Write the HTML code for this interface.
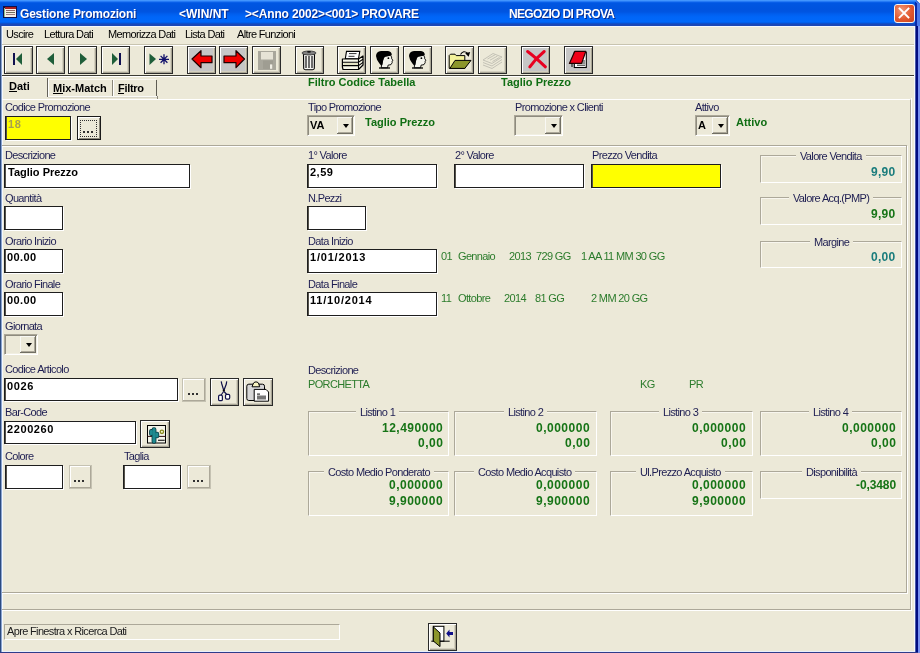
<!DOCTYPE html><html><head><meta charset="utf-8"><style>*{box-sizing:border-box}
html,body{margin:0;padding:0}
body{width:920px;height:653px;overflow:hidden;position:relative;background:#ECE9D8;font-family:"Liberation Sans",sans-serif;font-size:11px;color:#000}
.a{position:absolute}
svg.a{overflow:visible}
.t{position:absolute;white-space:pre;line-height:13px;font-size:11px;letter-spacing:-0.65px}
.ttl{position:absolute;white-space:pre;line-height:15px;font-size:12px;font-weight:bold;color:#fff;text-shadow:1px 1px 0 #0A2A8A}
.lb{color:#1E1E52}
.b{font-weight:bold;letter-spacing:0}
.n{font-weight:bold;letter-spacing:0.9px}
.g{color:#2C7C2C}
.gb{color:#106E14;font-weight:bold}
.inp{position:absolute;background:#fff;border:1px solid #1e1e1e;box-shadow:inset 1px 0 0 #55534a,1px 1px 0 #fff}
.btn{position:absolute;width:29px;height:28px;border:1px solid #2a2a2a;background:#ECE9D8;box-shadow:inset 1px 1px 0 #fff,inset -1px -1px 0 #A8A595,inset -2px -2px 0 #D4D0C0}
.combo{position:absolute;background:#ECE9D8;border-top:1px solid #ACA899;border-left:1px solid #ACA899;border-right:1px solid #fff;border-bottom:1px solid #fff;box-shadow:inset 1px 1px 0 #8E8B7E,inset -1px -1px 0 #F1EFE2}
.dd{position:absolute;top:1px;right:1px;width:16px;bottom:1px;background:#ECE9D8;border-right:1px solid #716F64;border-bottom:1px solid #716F64;box-shadow:inset 1px 1px 0 #F8F8F4,inset -1px -1px 0 #ACA899}
.dd:after{content:"";position:absolute;left:6px;top:7px;border-left:3px solid transparent;border-right:3px solid transparent;border-top:4px solid #000}
.grp{position:absolute;border-top:1px solid #ACA899;border-left:1px solid #ACA899;border-right:1px solid #fff;border-bottom:1px solid #fff;box-shadow:inset 1px 1px 0 #F8F6EE}
.gt{position:absolute;white-space:pre;line-height:13px;font-size:11px;letter-spacing:-0.65px;color:#1E1E52;background:#ECE9D8;padding:0 4px}
.dots{position:absolute;background:#ECE9D8;border:1px solid #C5C2B2;box-shadow:inset -1px -1px 0 #ACA899,inset 1px 1px 0 #fff}

.nv{position:absolute;white-space:pre;line-height:13px;font-size:12px;font-weight:bold;letter-spacing:0.5px}

.t,.ttl,.gt,.nv{will-change:transform}
</style></head><body>
<div class="a" style="left:0;top:0;width:920px;height:26px;background:linear-gradient(#4A9CFF 0px,#3A8EFC 1px,#1066EE 2px,#0056E2 3px,#0053DE 9px,#0055E2 12px,#005EEE 14px,#0066F8 17px,#0068FA 22px,#0058E0 23px,#1A48B8 24px,#1A48B8 26px)"></div>
<div class="a" style="left:2px;top:26px;width:912px;height:1px;background:#F4F8FC"></div>
<div class="a" style="left:0;top:26px;width:3px;height:627px;background:linear-gradient(90deg,#2C4A80 0,#2C4A80 1px,#8AA4D0 1px,#8AA4D0 2px,#F4F8FC 2px)"></div>
<div class="a" style="left:914px;top:26px;width:6px;height:627px;background:linear-gradient(90deg,#F4F8FC 0,#F4F8FC 1px,#4A5AA8 1px,#4A5AA8 2px,#000C80 2px,#000C80 4px,#7890F0 4px)"></div>
<div class="a" style="left:2px;top:651px;width:913px;height:1px;background:#E8F0FC"></div>
<div class="a" style="left:0;top:652px;width:918px;height:1px;background:#2E3C8A"></div>
<div class="a" style="left:3px;top:6px;width:14px;height:12px;background:#10104A"></div>
<div class="a" style="left:5px;top:7px;width:11px;height:2px;background:#A82020"></div>
<div class="a" style="left:5px;top:9px;width:11px;height:8px;background:#F6EEE6"></div>
<div class="a" style="left:4px;top:8px;width:1px;height:9px;background:#90C090"></div>
<div class="a" style="left:6px;top:10px;width:9px;height:1px;background:#906A6A"></div>
<div class="a" style="left:6px;top:12px;width:9px;height:1px;background:#707060"></div>
<div class="a" style="left:6px;top:14px;width:9px;height:1px;background:#A08080"></div>
<div class="ttl" style="left:20px;top:7px;letter-spacing:-0.2px">Gestione Promozioni</div>
<div class="ttl" style="left:179px;top:7px;">&lt;WIN/NT</div>
<div class="ttl" style="left:245px;top:7px;letter-spacing:-0.15px">&gt;&lt;Anno 2002&gt;&lt;001&gt; PROVARE</div>
<div class="ttl" style="left:509px;top:7px;letter-spacing:-0.65px">NEGOZIO DI PROVA</div>
<div class="a" style="left:894px;top:4px;width:21px;height:19px;border:1px solid #F4F4F4;border-radius:3px;background:radial-gradient(ellipse at 35% 30%,#F09878,#E2582E 55%,#C84420)"></div>
<svg class="a" style="left:894px;top:4px" width="21" height="19"><path d="M5.5 4.5 L14.5 13.5 M14.5 4.5 L5.5 13.5" stroke="#fff" stroke-width="1.8" stroke-linecap="square"/></svg>
<div class="a" style="left:915px;top:2px;width:5px;height:24px;background:linear-gradient(90deg,#0A2AA8 0,#0A2AA8 2px,#4A78E8 2px)"></div>
<div class="a" style="left:916px;top:0;width:4px;height:3px;background:linear-gradient(225deg,#E8EEF8 0,#E8EEF8 50%,#3A70E0 50%)"></div>
<div class="t" style="left:6px;top:28px;">Uscire</div>
<div class="t" style="left:44px;top:28px;">Lettura Dati</div>
<div class="t" style="left:108px;top:28px;">Memorizza Dati</div>
<div class="t" style="left:185px;top:28px;">Lista Dati</div>
<div class="t" style="left:237px;top:28px;">Altre Funzioni</div>
<div class="a" style="left:2px;top:44px;width:912px;height:1px;background:#C8C4B0"></div>
<div class="a" style="left:2px;top:45px;width:912px;height:1px;background:#fff"></div>
<div class="btn" style="left:4px;top:46px;">
<svg class="a" style="left:-1px;top:-1px" width="29" height="28" viewBox="0 0 29 28"><rect x="9" y="7" width="2" height="12" fill="#101050"/><path d="M12 13 L18 7 L18 19 Z" fill="#1F5E3A"/></svg>
</div>
<div class="btn" style="left:36px;top:46px;">
<svg class="a" style="left:-1px;top:-1px" width="29" height="28" viewBox="0 0 29 28"><path d="M11 13 L18 7 L18 19 Z" fill="#1F5E3A"/></svg>
</div>
<div class="btn" style="left:68px;top:46px;">
<svg class="a" style="left:-1px;top:-1px" width="29" height="28" viewBox="0 0 29 28"><path d="M12 7 L19 13 L12 19 Z" fill="#1F5E3A"/></svg>
</div>
<div class="btn" style="left:101px;top:46px;">
<svg class="a" style="left:-1px;top:-1px" width="29" height="28" viewBox="0 0 29 28"><path d="M11 7 L17 13 L11 19 Z" fill="#1F5E3A"/><rect x="18" y="7" width="2" height="12" fill="#101050"/></svg>
</div>
<div class="btn" style="left:144px;top:46px;">
<svg class="a" style="left:-1px;top:-1px" width="29" height="28" viewBox="0 0 29 28"><path d="M5.5 7.5 L12 13 L5.5 19 Z" fill="#1F5E3A"/><g stroke="#10106A" stroke-width="1.3"><path d="M15 13.3 H25 M20 8.3 V18.3 M16.6 9.9 L23.4 16.7 M23.4 9.9 L16.6 16.7"/></g><circle cx="20" cy="13.3" r="1.6" fill="#10106A"/></svg>
</div>
<div class="btn" style="left:187px;top:46px;background:#C6C6C6;">
<svg class="a" style="left:-1px;top:-1px" width="29" height="28" viewBox="0 0 29 28"><path d="M5 13 L14 4.7 L14 10 L25 10 L25 16.7 L14 16.7 L14 21.7 Z" fill="#F00000" stroke="#200000" stroke-width="1.2" stroke-linejoin="round"/></svg>
</div>
<div class="btn" style="left:219px;top:46px;background:#C6C6C6;">
<svg class="a" style="left:-1px;top:-1px" width="29" height="28" viewBox="0 0 29 28"><path d="M25.5 13 L17 4.7 L17 10 L5 10 L5 16.7 L17 16.7 L17 21.7 Z" fill="#F00000" stroke="#200000" stroke-width="1.2" stroke-linejoin="round"/></svg>
</div>
<div class="btn" style="left:252px;top:46px;">
<svg class="a" style="left:-1px;top:-1px" width="29" height="28" viewBox="0 0 29 28"><path d="M6 5 H24 V24 H6 Z" fill="#A9A79C"/><rect x="9" y="6" width="12" height="7.5" fill="#E6E3D6"/><rect x="11" y="14.5" width="10" height="8.5" fill="#9F9D92"/><rect x="18" y="18.4" width="2.3" height="4.4" fill="#F0EEE4"/></svg>
</div>
<div class="btn" style="left:295px;top:46px;">
<svg class="a" style="left:-1px;top:-1px" width="29" height="28" viewBox="0 0 29 28"><path d="M8.5 8 H19.5 L19.3 22.5 Q19 23.8 17.5 23.8 H10.5 Q9 23.8 8.7 22.5 Z" fill="#F4F4F0" stroke="#000" stroke-width="1.1"/><ellipse cx="14" cy="7" rx="7" ry="2" fill="#808080" stroke="#303030" stroke-width="0.8"/><ellipse cx="14" cy="5.8" rx="2" ry="0.9" fill="#111"/><path d="M11 10 V22 M14 10 V22 M17 10 V22" stroke="#333" stroke-width="1.4"/></svg>
</div>
<div class="btn" style="left:337px;top:46px;">
<svg class="a" style="left:-1px;top:-1px" width="29" height="28" viewBox="0 0 29 28"><path d="M9.5 5.4 H22.8 L21.5 12.7 H8.3 Z" fill="#fff" stroke="#000" stroke-width="1.1"/><path d="M12 7.6 H19.5 M11.5 10.3 H17.5" stroke="#333" stroke-width="1"/><path d="M5.4 13 H21.5 L26 10 V19 L21.5 23.5 H6 L5.4 21 Z" fill="#F8F8E8" stroke="#000" stroke-width="1.2" stroke-linejoin="round"/><path d="M5.5 16.2 H21.5 L26 13.2 M5.8 19.6 H21.5 L26 16.4 M21.5 13 V23.5" stroke="#000" stroke-width="1.1" fill="none"/><path d="M6.5 18 H21" stroke="#D0D0A0" stroke-width="1"/></svg>
</div>
<div class="btn" style="left:370px;top:46px;">
<svg class="a" style="left:-1px;top:-1px" width="29" height="28" viewBox="0 0 29 28"><path d="M13.5 10.5 L20.5 9.3 L21.6 11 L21.7 12.8 L23 14.3 L22 15.2 L22.2 16.6 L21 18.6 L18 19.2 L17.6 21.8 L11.2 21.8 L11.8 18 Z" fill="#F4F4EC" stroke="#000" stroke-width="0.9"/><path d="M6 10 Q6.2 5.6 11 5 L18 5 Q21.8 5.4 21.8 9.2 L20.5 9.6 L15.5 10.4 L14 12 L13 15 L12.4 18.8 L11.2 19.8 Q8.5 16.5 7 13.8 Z" fill="#000"/><circle cx="18.4" cy="12.2" r="0.9" fill="#000"/><path d="M9 22 H20" stroke="#000" stroke-width="1.3"/></svg>
</div>
<div class="btn" style="left:403px;top:46px;">
<svg class="a" style="left:-1px;top:-1px" width="29" height="28" viewBox="0 0 29 28"><path d="M13.5 10.5 L20.5 9.3 L21.6 11 L21.7 12.8 L23 14.3 L22 15.2 L22.2 16.6 L21 18.6 L18 19.2 L17.6 21.8 L11.2 21.8 L11.8 18 Z" fill="#F4F4EC" stroke="#000" stroke-width="0.9"/><path d="M6 10 Q6.2 5.6 11 5 L18 5 Q21.8 5.4 21.8 9.2 L20.5 9.6 L15.5 10.4 L14 12 L13 15 L12.4 18.8 L11.2 19.8 Q8.5 16.5 7 13.8 Z" fill="#000"/><circle cx="18.4" cy="12.2" r="0.9" fill="#000"/><path d="M9 22 H20" stroke="#000" stroke-width="1.3"/></svg>
</div>
<div class="btn" style="left:445px;top:46px;">
<svg class="a" style="left:-1px;top:-1px" width="29" height="28" viewBox="0 0 29 28"><path d="M4.2 9.5 L5.5 8.2 L10 8.2 L11.2 9.6 L19.8 9.6 L19.8 22.4 L4.2 22.4 Z" fill="#F4F29A" stroke="#000" stroke-width="1"/><path d="M10 14.4 L26 14.4 L19.8 22.4 L4.9 22.4 Z" fill="#8C962A" stroke="#000" stroke-width="1"/><path d="M15.5 8.5 Q18.5 3.8 22.5 7.2" stroke="#000" stroke-width="1.1" fill="none"/><path d="M20.2 7.2 L25.2 6 L23.6 10.8 Z" fill="#000"/></svg>
</div>
<div class="btn" style="left:478px;top:46px;">
<svg class="a" style="left:-1px;top:-1px" width="29" height="28" viewBox="0 0 29 28"><g fill="none" stroke="#C4C2B6" stroke-width="1"><path d="M5 14 L15 7.5 L24 11 L14 17.5 Z"/><path d="M5 16.5 L14 20 L24 13.5"/><path d="M5 19 L14 22.5 L24 16"/><path d="M9.5 13 L17 8.8 M12 14.2 L19.5 10 M14.5 15.5 L21.5 11.4"/></g></svg>
</div>
<div class="btn" style="left:521px;top:46px;background:#C6C6C6;">
<svg class="a" style="left:-1px;top:-1px" width="29" height="28" viewBox="0 0 29 28"><path d="M6.6 5.5 Q14 11 24.4 20.8 M23.2 5.5 Q15 12 8.8 20.8" stroke="#E80020" stroke-width="3" fill="none" stroke-linecap="round"/></svg>
</div>
<div class="btn" style="left:564px;top:46px;background:#C6C6C6;">
<svg class="a" style="left:-1px;top:-1px" width="29" height="28" viewBox="0 0 29 28"><rect x="10.3" y="6.3" width="12" height="15.2" fill="#fff" stroke="#000" stroke-width="1.1"/><path d="M13 15 H21 M13 17 H21 M13 19.2 H21" stroke="#222" stroke-width="1"/><path d="M10.7 5.4 L21.8 5.4 L17.6 17.4 L5.4 17.4 Z" fill="#F00018" stroke="#200000" stroke-width="1.2" stroke-linejoin="round"/><path d="M8 17.5 V21" stroke="#000" stroke-width="1"/></svg>
</div>
<div class="a" style="left:2px;top:75px;width:912px;height:1px;background:#3C3C34"></div>
<div class="a" style="left:2px;top:76px;width:912px;height:1px;background:#fff"></div>
<div class="a" style="left:47px;top:78px;width:1px;height:19px;background:#64625A"></div>
<div class="a" style="left:48px;top:80px;width:1px;height:17px;background:#FFFFFF"></div>
<div class="a" style="left:48px;top:79px;width:108px;height:1px;background:#F8F6F0"></div>
<div class="a" style="left:112px;top:80px;width:1px;height:16px;background:#8A877A"></div>
<div class="a" style="left:113px;top:80px;width:1px;height:16px;background:#FFFFFF"></div>
<div class="a" style="left:156px;top:80px;width:1px;height:17px;background:#5E5C52"></div>
<div class="a" style="left:157px;top:96px;width:1px;height:3px;background:#8A877A"></div>
<div class="t b" style="left:9px;top:80px">Dati</div>
<div class="a" style="left:9px;top:91px;width:8px;height:1px;background:#000"></div>
<div class="t b" style="left:53px;top:82px">Mix-Match</div>
<div class="a" style="left:53px;top:93px;width:10px;height:1px;background:#000"></div>
<div class="t b" style="left:118px;top:82px;letter-spacing:-0.3px">Filtro</div>
<div class="a" style="left:118px;top:93px;width:6px;height:1px;background:#000"></div>
<div class="t gb" style="left:308px;top:76px;letter-spacing:0">Filtro Codice Tabella</div>
<div class="t gb" style="left:501px;top:76px;letter-spacing:0">Taglio Prezzo</div>
<div class="a" style="left:2px;top:99px;width:909px;height:511px;border-top:1px solid #fff;border-right:1px solid #ACA899;border-bottom:1px solid #ACA899"></div>
<div class="a" style="left:48px;top:96px;width:109px;height:2px;background:linear-gradient(#FAFAF6 0,#FAFAF6 1px,#D8D5C8 1px)"></div>
<div class="a" style="left:2px;top:610px;width:910px;height:1px;background:#fff"></div>
<div class="a" style="left:911px;top:98px;width:1px;height:513px;background:#fff"></div>
<div class="a" style="left:2px;top:145px;width:905px;height:1px;background:#ACA899"></div>
<div class="a" style="left:2px;top:146px;width:905px;height:1px;background:#fff"></div>
<div class="a" style="left:906px;top:146px;width:1px;height:447px;background:#ACA899"></div>
<div class="a" style="left:907px;top:146px;width:1px;height:448px;background:#fff"></div>
<div class="a" style="left:2px;top:592px;width:905px;height:1px;background:#ACA899"></div>
<div class="a" style="left:2px;top:593px;width:906px;height:1px;background:#fff"></div>
<div class="t lb" style="left:5px;top:101px;">Codice Promozione</div>
<div class="inp" style="left:5px;top:116px;width:66px;height:24px;background:#FFFF00"></div>
<div class="t b" style="left:8px;top:118px;color:#A8A050;letter-spacing:0.6px">18</div>
<div class="a" style="left:77px;top:116px;width:24px;height:24px;border:1px solid #1a1a1a;background:#ECE9D8;box-shadow:inset 1px 1px 0 #fff,inset -1px -1px 0 #8a877a"></div>
<div class="a" style="left:80px;top:120px;width:17px;height:17px;border:1px dotted #303030"></div>
<div class="a" style="left:83px;top:131px;width:2px;height:2px;background:#303030"></div>
<div class="a" style="left:87px;top:131px;width:2px;height:2px;background:#303030"></div>
<div class="a" style="left:91px;top:131px;width:2px;height:2px;background:#303030"></div>
<div class="t lb" style="left:308px;top:101px;">Tipo Promozione</div>
<div class="combo" style="left:307px;top:115px;width:48px;height:21px"><div class="dd" style="width:16px"></div></div>
<div class="t b" style="left:310px;top:119px;">VA</div>
<div class="t gb" style="left:365px;top:116px;letter-spacing:0">Taglio Prezzo</div>
<div class="t lb" style="left:515px;top:101px;">Promozione x Clienti</div>
<div class="combo" style="left:514px;top:115px;width:49px;height:21px"><div class="dd" style="width:16px"></div></div>
<div class="t lb" style="left:695px;top:101px;">Attivo</div>
<div class="combo" style="left:695px;top:115px;width:35px;height:21px"><div class="dd" style="width:16px"></div></div>
<div class="t b" style="left:698px;top:119px;">A</div>
<div class="t gb" style="left:736px;top:116px;letter-spacing:0">Attivo</div>
<div class="t lb" style="left:5px;top:149px;">Descrizione</div>
<div class="inp" style="left:4px;top:164px;width:186px;height:24px;background:#fff"></div>
<div class="t b" style="left:8px;top:166px;">Taglio Prezzo</div>
<div class="t lb" style="left:308px;top:149px;">1° Valore</div>
<div class="inp" style="left:307px;top:164px;width:130px;height:24px;background:#fff"></div>
<div class="t n" style="left:310px;top:166px;letter-spacing:0.5px">2,59</div>
<div class="t lb" style="left:455px;top:149px;">2° Valore</div>
<div class="inp" style="left:454px;top:164px;width:130px;height:24px;background:#fff"></div>
<div class="t lb" style="left:592px;top:149px;">Prezzo Vendita</div>
<div class="inp" style="left:591px;top:164px;width:130px;height:24px;background:#FFFF00"></div>
<div class="grp" style="left:760px;top:155px;width:142px;height:28px"></div>
<div class="gt" style="left:796px;top:150px">Valore Vendita</div>
<div class="nv" style="right:24px;top:166px;color:#1A7C7C;letter-spacing:0.3px">9,90</div>
<div class="grp" style="left:760px;top:197px;width:142px;height:28px"></div>
<div class="gt" style="left:789px;top:192px">Valore Acq.(PMP)</div>
<div class="nv" style="right:24px;top:208px;color:#167416;letter-spacing:0.3px">9,90</div>
<div class="grp" style="left:760px;top:241px;width:142px;height:27px"></div>
<div class="gt" style="left:810px;top:236px">Margine</div>
<div class="nv" style="right:24px;top:251px;color:#1A7C7C;letter-spacing:0.3px">0,00</div>
<div class="t lb" style="left:5px;top:192px;">Quantità</div>
<div class="inp" style="left:4px;top:206px;width:59px;height:24px;background:#fff"></div>
<div class="t lb" style="left:308px;top:192px;">N.Pezzi</div>
<div class="inp" style="left:307px;top:206px;width:59px;height:24px;background:#fff"></div>
<div class="t lb" style="left:5px;top:235px;">Orario Inizio</div>
<div class="inp" style="left:4px;top:249px;width:59px;height:24px;background:#fff"></div>
<div class="t b" style="left:7px;top:251px;letter-spacing:0.4px">00.00</div>
<div class="t lb" style="left:308px;top:235px;">Data Inizio</div>
<div class="inp" style="left:307px;top:249px;width:130px;height:24px;background:#fff"></div>
<div class="t n" style="left:310px;top:251px;letter-spacing:0.8px">1/01/2013</div>
<div class="t g" style="left:441px;top:250px;">01</div>
<div class="t g" style="left:458px;top:250px;">Gennaio</div>
<div class="t g" style="left:509px;top:250px;">2013</div>
<div class="t g" style="left:536px;top:250px;">729 GG</div>
<div class="t g" style="left:581px;top:250px;">1 AA 11 MM 30 GG</div>
<div class="t lb" style="left:5px;top:278px;">Orario Finale</div>
<div class="inp" style="left:4px;top:292px;width:59px;height:24px;background:#fff"></div>
<div class="t b" style="left:7px;top:294px;letter-spacing:0.4px">00.00</div>
<div class="t lb" style="left:308px;top:278px;">Data Finale</div>
<div class="inp" style="left:307px;top:292px;width:130px;height:24px;background:#fff"></div>
<div class="t n" style="left:310px;top:294px;letter-spacing:0.8px">11/10/2014</div>
<div class="t g" style="left:441px;top:292px;">11</div>
<div class="t g" style="left:458px;top:292px;">Ottobre</div>
<div class="t g" style="left:504px;top:292px;">2014</div>
<div class="t g" style="left:535px;top:292px;">81 GG</div>
<div class="t g" style="left:591px;top:292px;">2 MM 20 GG</div>
<div class="t lb" style="left:5px;top:320px;">Giornata</div>
<div class="combo" style="left:4px;top:334px;width:34px;height:21px"><div class="dd" style="width:16px"></div></div>
<div class="t lb" style="left:5px;top:363px;">Codice Articolo</div>
<div class="inp" style="left:4px;top:378px;width:174px;height:23px;background:#fff"></div>
<div class="t n" style="left:7px;top:380px;letter-spacing:0.6px">0026</div>
<div class="dots" style="left:182px;top:378px;width:24px;height:24px"></div>
<div class="a" style="left:188px;top:393px;width:2px;height:2px;background:#303030"></div>
<div class="a" style="left:192px;top:393px;width:2px;height:2px;background:#303030"></div>
<div class="a" style="left:196px;top:393px;width:2px;height:2px;background:#303030"></div>
<div class="btn" id="scis" style="left:210px;top:378px;width:29px;height:28px"><svg class="a" style="left:-1px;top:-1px" width="29" height="28" viewBox="0 0 29 28"><path d="M11.2 3.4 L11.8 6 L13.8 12.7 M16.7 3.4 L16.3 6 L13.8 12.7" stroke="#10104A" stroke-width="1.2" fill="none"/><circle cx="13.8" cy="12.7" r="1.1" fill="#000"/><path d="M13.6 13.5 L11 17.2 M14 13.5 L16.8 16.5" stroke="#10104A" stroke-width="1.1"/><rect x="8.6" y="17.1" width="3.8" height="5.6" rx="1.3" fill="#fff" stroke="#10104A" stroke-width="1.2"/><rect x="15.5" y="16.3" width="4.2" height="4.8" rx="1.3" fill="#fff" stroke="#10104A" stroke-width="1.2"/></svg></div>
<div class="btn" id="clip" style="left:243px;top:378px;width:30px;height:28px"><svg class="a" style="left:-1px;top:-1px" width="29" height="28" viewBox="0 0 29 28"><rect x="3.8" y="6.2" width="17.7" height="16.3" rx="2" fill="#D8D8D8" stroke="#000" stroke-width="1"/><path d="M9 8.8 L10.5 5 L12 4 L14 4 L15.5 5 L16.7 8.8 Z" fill="#F8F4C0" stroke="#000" stroke-width="1"/><path d="M11.2 11.4 H23 L25.6 14 V23.2 H11.2 Z" fill="#fff" stroke="#000" stroke-width="1"/><rect x="14" y="15.5" width="3" height="1.2" fill="#333"/><rect x="14" y="17.5" width="9" height="4" fill="#777"/></svg></div>
<div class="t lb" style="left:5px;top:406px;">Bar-Code</div>
<div class="inp" style="left:4px;top:421px;width:132px;height:23px;background:#fff"></div>
<div class="t n" style="left:7px;top:423px;letter-spacing:0.6px">2200260</div>
<div class="btn" id="bc" style="left:140px;top:420px;width:30px;height:28px"><svg class="a" style="left:-1px;top:-1px" width="29" height="28" viewBox="0 0 29 28"><rect x="7.5" y="5.5" width="18" height="17.5" fill="#F4F4EA" stroke="#000" stroke-width="1"/><path d="M7.5 16.4 H25.5" stroke="#301010" stroke-width="1"/><path d="M18 20.3 H24.7" stroke="#222" stroke-width="1.2"/><g fill="none" stroke="#0A3A40" stroke-width="1.6"><rect x="12.4" y="8.1" width="3.2" height="14.9" rx="1.4"/><rect x="9.9" y="9.9" width="2.8" height="5.2" rx="1.2"/><rect x="15.3" y="12.5" width="3.1" height="4.9" rx="1.2"/></g><g fill="#1E8A90"><rect x="12.4" y="8.1" width="3.2" height="14.9" rx="1.4"/><rect x="9.9" y="9.9" width="2.8" height="5.2" rx="1.2"/><rect x="15.3" y="12.5" width="3.1" height="4.9" rx="1.2"/></g><circle cx="21.9" cy="11.8" r="1.7" fill="#F8F8D0" stroke="#8A8A20" stroke-width="1.3"/></svg></div>
<div class="t lb" style="left:5px;top:450px;">Colore</div>
<div class="inp" style="left:5px;top:465px;width:58px;height:24px;background:#fff"></div>
<div class="dots" style="left:69px;top:465px;width:23px;height:24px"></div>
<div class="a" style="left:74px;top:480px;width:2px;height:2px;background:#303030"></div>
<div class="a" style="left:78px;top:480px;width:2px;height:2px;background:#303030"></div>
<div class="a" style="left:82px;top:480px;width:2px;height:2px;background:#303030"></div>
<div class="t lb" style="left:124px;top:450px;">Taglia</div>
<div class="inp" style="left:123px;top:465px;width:58px;height:24px;background:#fff"></div>
<div class="dots" style="left:187px;top:465px;width:24px;height:24px"></div>
<div class="a" style="left:193px;top:480px;width:2px;height:2px;background:#303030"></div>
<div class="a" style="left:197px;top:480px;width:2px;height:2px;background:#303030"></div>
<div class="a" style="left:201px;top:480px;width:2px;height:2px;background:#303030"></div>
<div class="t lb" style="left:308px;top:364px;">Descrizione</div>
<div class="t g" style="left:308px;top:378px;">PORCHETTA</div>
<div class="t g" style="left:640px;top:378px;">KG</div>
<div class="t g" style="left:689px;top:378px;">PR</div>
<div class="grp" style="left:308px;top:411px;width:141px;height:45px"></div>
<div class="gt" style="left:356px;top:406px">Listino 1</div>
<div class="nv" style="right:477px;top:422px;color:#167416">12,490000</div>
<div class="nv" style="right:477px;top:437px;color:#167416">0,00</div>
<div class="grp" style="left:454px;top:411px;width:143px;height:45px"></div>
<div class="gt" style="left:504px;top:406px">Listino 2</div>
<div class="nv" style="right:330px;top:422px;color:#167416">0,000000</div>
<div class="nv" style="right:330px;top:437px;color:#167416">0,00</div>
<div class="grp" style="left:610px;top:411px;width:143px;height:45px"></div>
<div class="gt" style="left:659px;top:406px">Listino 3</div>
<div class="nv" style="right:174px;top:422px;color:#167416">0,000000</div>
<div class="nv" style="right:174px;top:437px;color:#167416">0,00</div>
<div class="grp" style="left:760px;top:411px;width:142px;height:45px"></div>
<div class="gt" style="left:809px;top:406px">Listino 4</div>
<div class="nv" style="right:24px;top:422px;color:#167416">0,000000</div>
<div class="nv" style="right:24px;top:437px;color:#167416">0,00</div>
<div class="grp" style="left:308px;top:471px;width:141px;height:45px"></div>
<div class="gt" style="left:324px;top:466px">Costo Medio Ponderato</div>
<div class="nv" style="right:477px;top:479px;color:#167416">0,000000</div>
<div class="nv" style="right:477px;top:495px;color:#167416">9,900000</div>
<div class="grp" style="left:454px;top:471px;width:143px;height:45px"></div>
<div class="gt" style="left:474px;top:466px">Costo Medio Acquisto</div>
<div class="nv" style="right:330px;top:479px;color:#167416">0,000000</div>
<div class="nv" style="right:330px;top:495px;color:#167416">9,900000</div>
<div class="grp" style="left:610px;top:471px;width:143px;height:45px"></div>
<div class="gt" style="left:636px;top:466px">Ul.Prezzo Acquisto</div>
<div class="nv" style="right:174px;top:479px;color:#167416">0,000000</div>
<div class="nv" style="right:174px;top:495px;color:#167416">9,900000</div>
<div class="grp" style="left:760px;top:471px;width:142px;height:28px"></div>
<div class="gt" style="left:802px;top:466px">Disponibilità</div>
<div class="nv" style="right:24px;top:479px;letter-spacing:-0.1px;color:#167416">-0,3480</div>
<div class="a" style="left:4px;top:624px;width:336px;height:16px;border-top:1px solid #ACA899;border-left:1px solid #ACA899;border-right:1px solid #fff;border-bottom:1px solid #fff"></div>
<div class="t" style="left:7px;top:625px;color:#202020">Apre Finestra x Ricerca Dati</div>
<div class="btn" id="exit" style="left:428px;top:623px;width:29px;height:28px"><svg class="a" style="left:-1px;top:-1px" width="29" height="28" viewBox="0 0 29 28"><rect x="5.3" y="3.3" width="10.6" height="14.9" fill="#fff" stroke="#000" stroke-width="1"/><path d="M3.3 18.2 H21.7" stroke="#000" stroke-width="1"/><path d="M5.3 3.8 L12 10 L12 23.6 L5.3 18 Z" fill="#8C962A" stroke="#000" stroke-width="1" stroke-linejoin="round"/><path d="M18.2 10.4 L21.5 6.5 V9 H25 V12 H21.5 V14.5 Z" fill="#10108A"/></svg></div>
</body></html>
